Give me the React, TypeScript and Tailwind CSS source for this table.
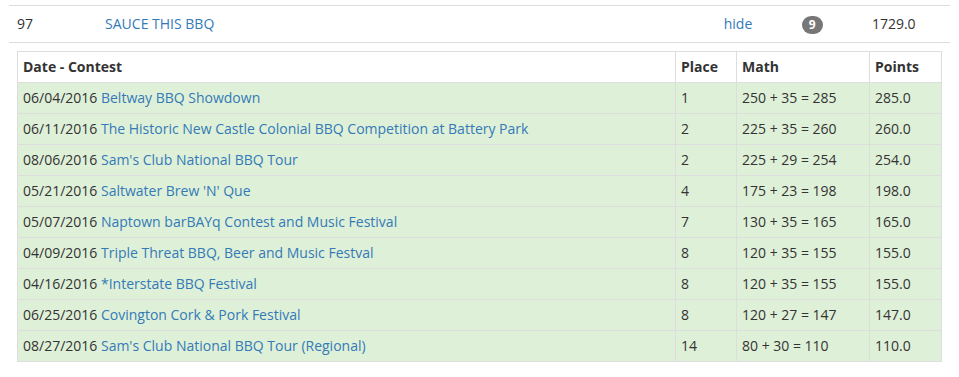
const results = [
  { date: "06/04/2016", contest: "Beltway BBQ Showdown", place: "1", math: "250 + 35 = 285", points: "285.0" },
  { date: "06/11/2016", contest: "The Historic New Castle Colonial BBQ Competition at Battery Park", place: "2", math: "225 + 35 = 260", points: "260.0" },
  { date: "08/06/2016", contest: "Sam's Club National BBQ Tour", place: "2", math: "225 + 29 = 254", points: "254.0" },
  { date: "05/21/2016", contest: "Saltwater Brew 'N' Que", place: "4", math: "175 + 23 = 198", points: "198.0" },
  { date: "05/07/2016", contest: "Naptown barBAYq Contest and Music Festival", place: "7", math: "130 + 35 = 165", points: "165.0" },
  { date: "04/09/2016", contest: "Triple Threat BBQ, Beer and Music Festval", place: "8", math: "120 + 35 = 155", points: "155.0" },
  { date: "04/16/2016", contest: "*Interstate BBQ Festival", place: "8", math: "120 + 35 = 155", points: "155.0" },
  { date: "06/25/2016", contest: "Covington Cork & Pork Festival", place: "8", math: "120 + 27 = 147", points: "147.0" },
  { date: "08/27/2016", contest: "Sam's Club National BBQ Tour (Regional)", place: "14", math: "80 + 30 = 110", points: "110.0" },
];

export default function App() {
  return (
    <div
      className="bg-white px-[9px] pt-[5px] text-[14px] leading-5 text-[#333]"
      style={{ fontFamily: '"Open Sans", "Noto Sans", sans-serif' }}
    >
      <table className="w-full border-collapse">
        <colgroup>
          <col className="w-[88px]" />
          <col className="w-[618px]" />
          <col className="w-[78px]" />
          <col className="w-[70px]" />
          <col className="w-[86px]" />
        </colgroup>
        <tbody>
          <tr className="border-t border-[#ddd]">
            <td className="p-2">97</td>
            <td className="p-2">
              <a className="text-[#337ab7]">SAUCE THIS BBQ</a>
            </td>
            <td className="p-2">
              <a className="text-[#337ab7]">hide</a>
            </td>
            <td className="p-2">
              <span className="inline-block rounded-[10px] bg-[#777] px-[7px] py-[3px] text-[12px] font-bold leading-none text-white">
                9
              </span>
            </td>
            <td className="p-2">1729.0</td>
          </tr>
          <tr className="border-t border-[#ddd]">
            <td colSpan={5} className="p-2">
              <table className="w-full border-collapse border border-[#ddd]">
                <colgroup>
                  <col />
                  <col className="w-[61px]" />
                  <col className="w-[133px]" />
                  <col className="w-[72px]" />
                </colgroup>
                <thead>
                  <tr className="bg-white text-left font-bold">
                    <th className="border border-[#ddd] px-[5px] py-[5px]">Date - Contest</th>
                    <th className="border border-[#ddd] px-[5px] py-[5px]">Place</th>
                    <th className="border border-[#ddd] px-[5px] py-[5px]">Math</th>
                    <th className="border border-[#ddd] px-[5px] py-[5px]">Points</th>
                  </tr>
                </thead>
                <tbody>
                  {results.map((r) => (
                    <tr key={r.date + r.contest} className="bg-[#dff0d8]">
                      <td className="border border-[#ddd] p-[5px]">
                        {r.date} <a className="text-[#337ab7]">{r.contest}</a>
                      </td>
                      <td className="border border-[#ddd] p-[5px]">{r.place}</td>
                      <td className="border border-[#ddd] p-[5px]">{r.math}</td>
                      <td className="border border-[#ddd] p-[5px]">{r.points}</td>
                    </tr>
                  ))}
                </tbody>
              </table>
            </td>
          </tr>
        </tbody>
      </table>
    </div>
  );
}
